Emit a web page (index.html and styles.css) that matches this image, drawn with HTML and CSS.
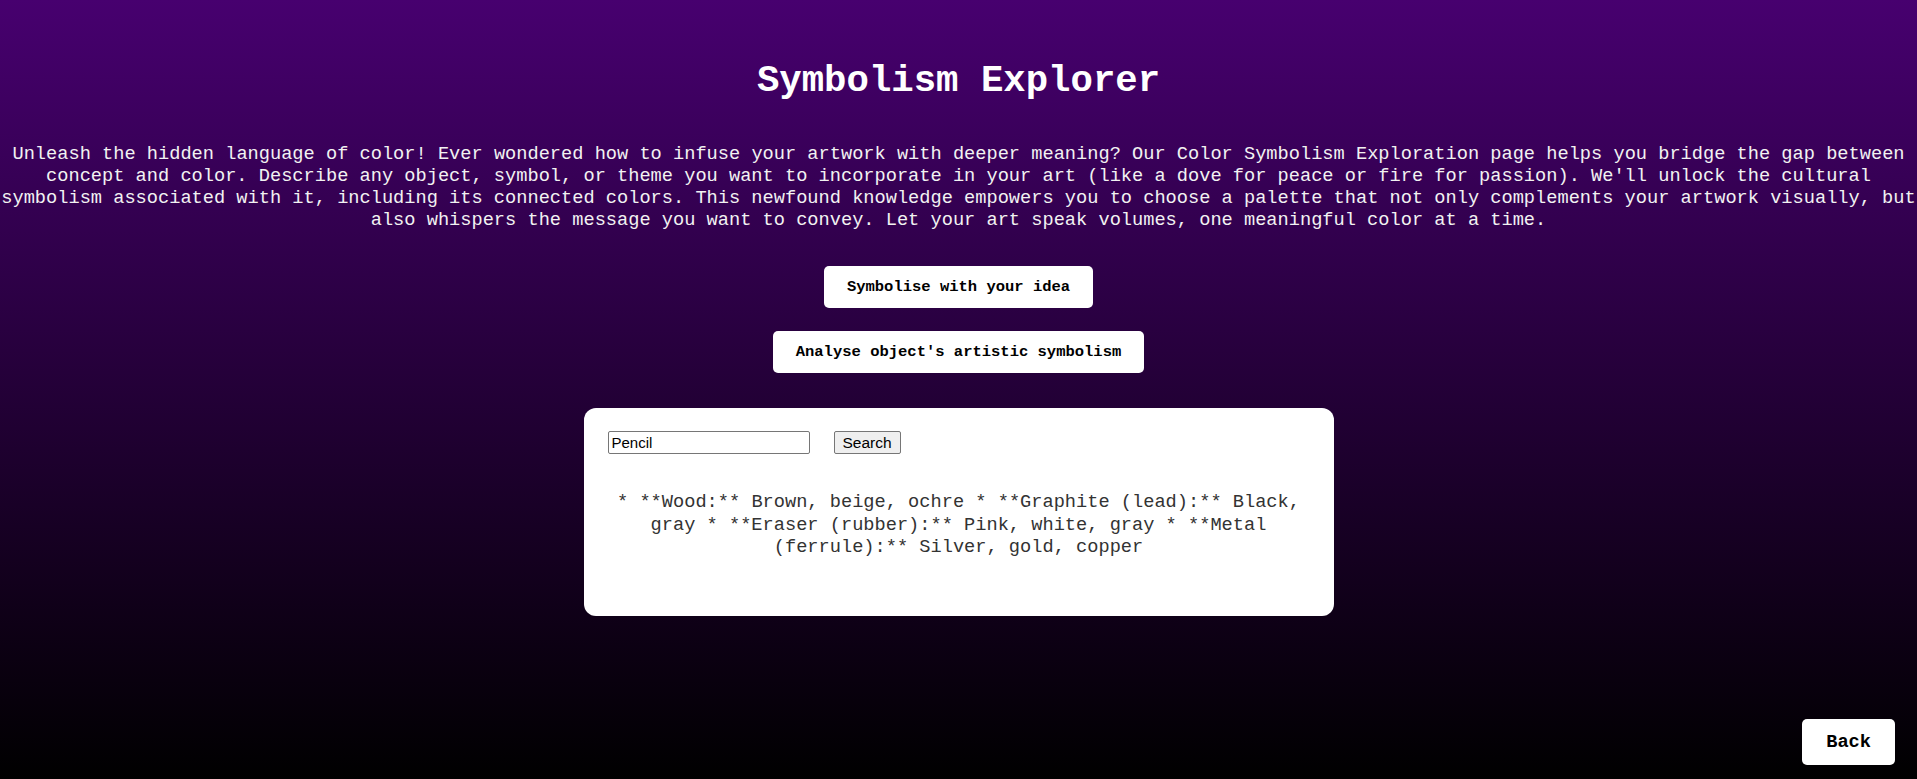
FILE: index.html
```html
<html>
<head>
  <title>Symbolism Explorer</title>
  <link rel="stylesheet" href="styles.css">
</head>
<body>
  <div class="page">
    <h1>Symbolism Explorer</h1>
    <p class="intro">Unleash the hidden language of color! Ever wondered how to infuse your artwork with deeper meaning? Our Color Symbolism Exploration page helps you bridge the gap between concept and color. Describe any object, symbol, or theme you want to incorporate in your art (like a dove for peace or fire for passion). We'll unlock the cultural symbolism associated with it, including its connected colors. This newfound knowledge empowers you to choose a palette that not only complements your artwork visually, but also whispers the message you want to convey. Let your art speak volumes, one meaningful color at a time.</p>

    <div class="modes">
      <button type="button" class="mode-btn">Symbolise with your idea</button>
      <button type="button" class="mode-btn">Analyse object's artistic symbolism</button>
    </div>

    <div class="card">
      <form class="search-row" onsubmit="return false">
        <input type="text" id="object" value="Pencil">
        <button type="submit" class="search-btn">Search</button>
      </form>
      <p class="result">* **Wood:** Brown, beige, ochre * **Graphite (lead):** Black, gray * **Eraser (rubber):** Pink, white, gray * **Metal (ferrule):** Silver, gold, copper</p>
    </div>
  </div>

  <button type="button" class="back-btn">Back</button>
</body>
</html>
```

FILE: styles.css
```css
html {
  height: 100%;
}

body {
  margin: 0;
  min-height: 100%;
  font-family: "Courier New", "Liberation Mono", monospace;
  background: linear-gradient(to bottom, #47006f, #000000);
  color: #f2f2f2;
}

.page {
  display: flex;
  flex-direction: column;
  align-items: center;
  text-align: center;
}

h1 {
  margin: 60px 0 0;
  font-size: 37.33px;
  line-height: 42px;
  font-weight: bold;
  color: #ffffff;
}

.intro {
  margin: 41px 0 0;
  font-size: 18.67px;
  line-height: 22px;
}

.modes {
  display: flex;
  flex-direction: column;
  align-items: center;
  gap: 23px;
  margin-top: 35px;
}

.mode-btn,
.back-btn {
  font-family: "Courier New", "Liberation Mono", monospace;
  font-weight: bold;
  background: #ffffff;
  color: #000000;
  border: none;
  border-radius: 5px;
  cursor: pointer;
}

.mode-btn {
  font-size: 15.5px;
  line-height: 18px;
  padding: 12px 23px;
}

.card {
  box-sizing: border-box;
  width: 750px;
  margin-top: 35px;
  padding: 23px 24px 24px;
  background: #ffffff;
  border-radius: 12px;
}

.search-row {
  display: flex;
  align-items: center;
  gap: 24px;
  margin: 0;
}

.search-row input {
  box-sizing: border-box;
  width: 202px;
  height: 23px;
  padding: 1px 3px;
  font-family: Arial, "Liberation Sans", sans-serif;
  font-size: 15px;
  border: 1px solid #767676;
  border-radius: 2px;
}

.search-btn {
  box-sizing: border-box;
  height: 23px;
  padding: 0 8px;
  font-family: Arial, "Liberation Sans", sans-serif;
  font-size: 15.5px;
  color: #000000;
  background: #efefef;
  border: 1px solid #767676;
  border-radius: 2px;
}

.result {
  margin: 37px 0 33px;
  font-size: 18.67px;
  line-height: 22.5px;
  color: #333333;
}

.back-btn {
  position: fixed;
  right: 22px;
  bottom: 14px;
  font-size: 18.67px;
  line-height: 22px;
  padding: 12px 24px;
}
```
